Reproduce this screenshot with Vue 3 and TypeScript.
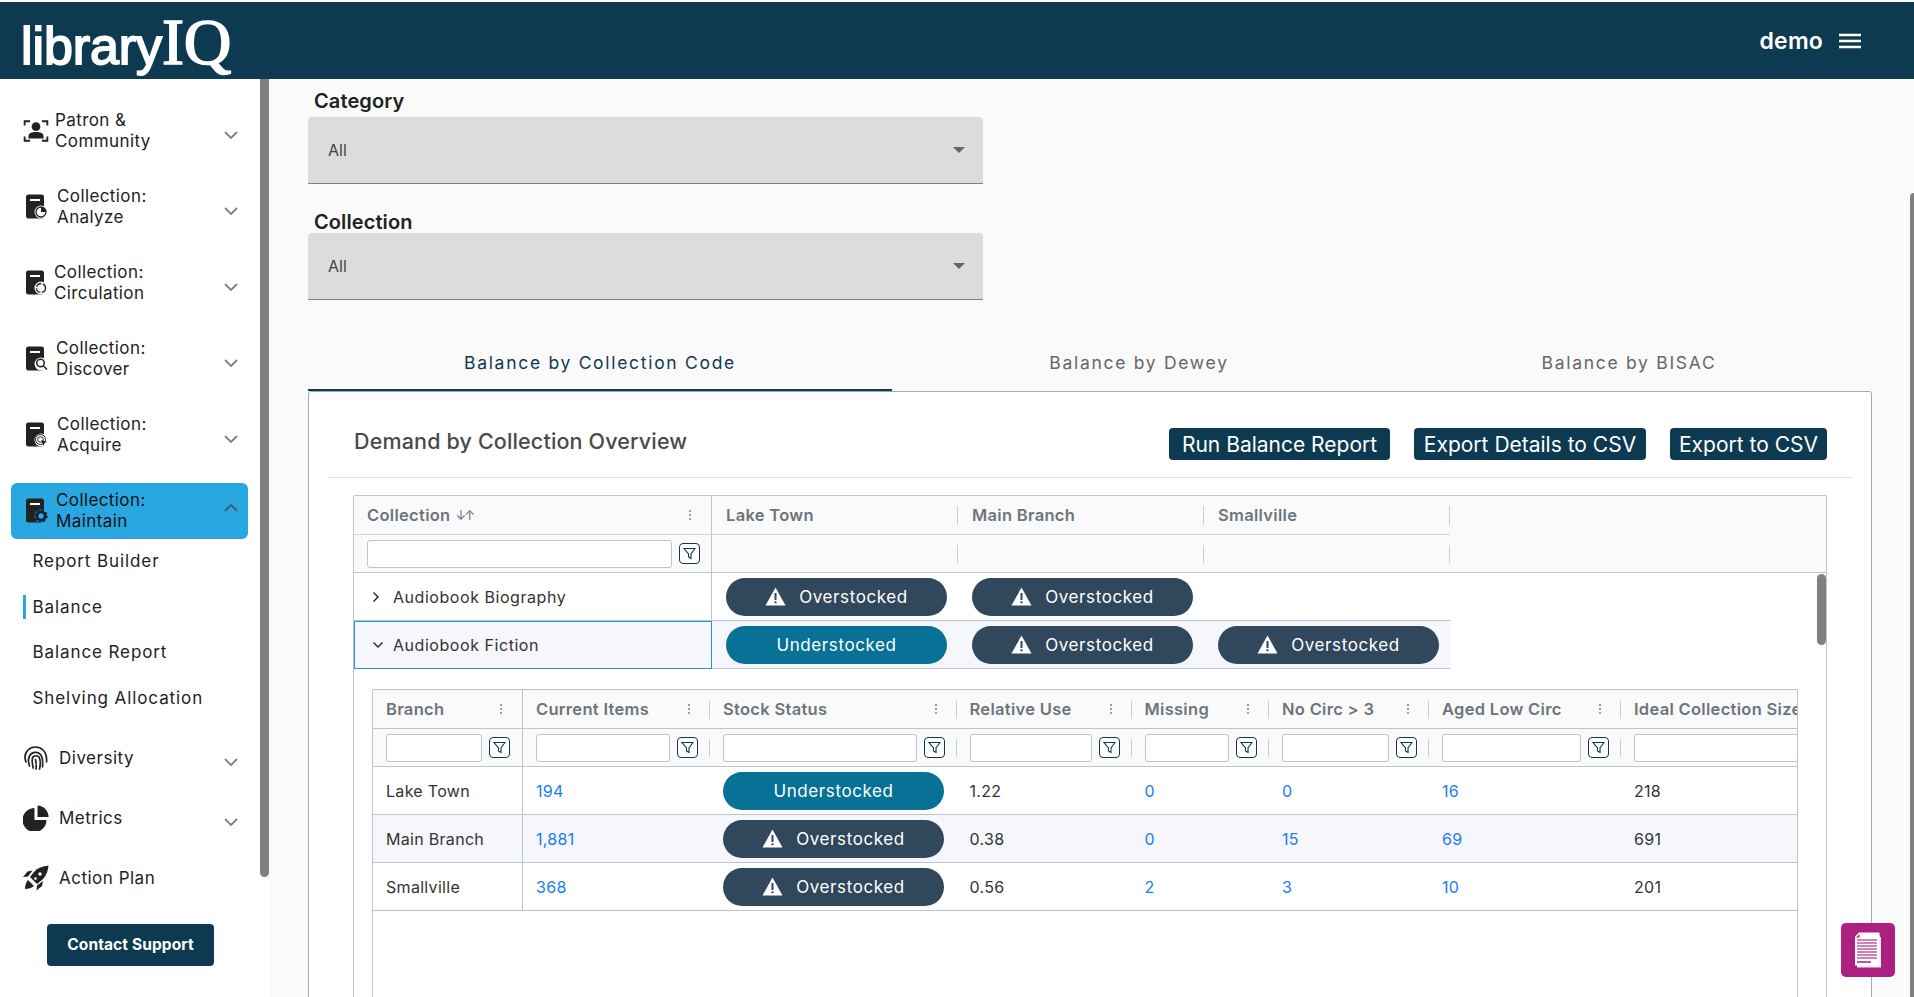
<script setup lang="ts">
interface NavItem { lines: string[]; icon: string; gap: number; chevron: boolean; active?: boolean }
interface Branch { name: string; items: string; stock: string; rel: string; missing: string; noCirc: string; aged: string; ideal: string }

const collectionNav: NavItem[] = [
  { lines: ['Patron &', 'Community'], icon: 'patron', gap: 31, chevron: true },
  { lines: ['Collection:', 'Analyze'], icon: 'analyze', gap: 33, chevron: true },
  { lines: ['Collection:', 'Circulation'], icon: 'circulation', gap: 30, chevron: true },
  { lines: ['Collection:', 'Discover'], icon: 'discover', gap: 32, chevron: true },
  { lines: ['Collection:', 'Acquire'], icon: 'acquire', gap: 33, chevron: true },
  { lines: ['Collection:', 'Maintain'], icon: 'maintain', gap: 32, chevron: true, active: true },
]
const subNav: string[] = ['Report Builder', 'Balance', 'Balance Report', 'Shelving Allocation']
const branches: string[] = ['Lake Town', 'Main Branch', 'Smallville']
const detailCols = [
  { title: 'Branch' }, { title: 'Current Items' }, { title: 'Stock Status' }, { title: 'Relative Use' },
  { title: 'Missing' }, { title: 'No Circ > 3' }, { title: 'Aged Low Circ' }, { title: 'Ideal Collection Size' },
]
const detailRows: Branch[] = [
  { name: 'Lake Town', items: '194', stock: 'Understocked', rel: '1.22', missing: '0', noCirc: '0', aged: '16', ideal: '218' },
  { name: 'Main Branch', items: '1,881', stock: 'Overstocked', rel: '0.38', missing: '0', noCirc: '15', aged: '69', ideal: '691' },
  { name: 'Smallville', items: '368', stock: 'Overstocked', rel: '0.56', missing: '2', noCirc: '3', aged: '10', ideal: '201' },
]
const fictionRow: string[] = ['Understocked', 'Overstocked', 'Overstocked']
const biographyRow: string[] = ['Overstocked', 'Overstocked']
</script>

<template>
  <div class="page">
    <header class="topbar">
      <div class="logo"><span class="logo-a">library</span><span class="logo-b">IQ</span></div>
      <div class="user">
        <span>demo</span>
        <svg width="24" height="16" viewBox="0 0 24 16"><path d="M1 2h22M1 8h22M1 14h22" stroke="#fff" stroke-width="2.4" /></svg>
      </div>
    </header>

    <div class="body">
      <aside class="side">
        <nav class="nav">
          <div v-for="item in collectionNav" :key="item.icon" class="nav-item" :class="{ active: item.active }">
            <svg v-if="item.icon === 'patron'" class="ic patron" width="26" height="26" viewBox="0 0 24 24">
              <path d="M1.5 7V3h5M17.5 3h5v4M1.5 17v4h5M17.5 21h5v-4" fill="none" stroke="#222" stroke-width="1.7" />
              <circle cx="12" cy="8" r="4" fill="#222" />
              <path d="M5 19v-2c0-3 3-4 7-4s7 1 7 4v2z" fill="#222" />
            </svg>
            <svg v-else class="ic" width="23" height="25" viewBox="0 0 23 25">
              <rect x="1" y="0.5" width="18" height="24" rx="2.5" fill="#222" />
              <rect x="5" y="5" width="10" height="2" fill="#fff" />
              <circle cx="16" cy="18" r="6.5" :fill="item.active ? '#29a7e1' : '#fff'" />
              <g v-if="item.icon === 'analyze'">
                <circle cx="16" cy="18" r="5" fill="none" stroke="#222" stroke-width="1.3" />
                <path d="M16 18V13a5 5 0 0 1 5 5z" fill="#222" />
              </g>
              <circle v-else-if="item.icon === 'circulation'" cx="16" cy="18" r="4.5" fill="none" stroke="#222" stroke-width="1.3" stroke-dasharray="6 1.5" />
              <g v-else-if="item.icon === 'discover'" fill="none" stroke="#222" stroke-width="1.5">
                <circle cx="15.5" cy="17" r="3.8" />
                <path d="M18.5 20l3.5 3.5" />
              </g>
              <g v-else-if="item.icon === 'acquire'" fill="none" stroke="#222" stroke-width="1">
                <circle cx="15.5" cy="17.5" r="5" />
                <circle cx="15.5" cy="17.5" r="2.8" />
                <path d="M16 18l6 2-2.5 1-1 3z" fill="#222" stroke="none" />
              </g>
              <g v-else>
                <circle cx="16" cy="18" r="4.2" fill="none" stroke="#10202c" stroke-width="3" />
                <circle cx="16" cy="18" r="6" fill="none" stroke="#10202c" stroke-width="1.5" stroke-dasharray="2 2.7" />
              </g>
            </svg>
            <div class="nav-text" :style="{ left: item.gap + 'px' }">
              <span v-for="l in item.lines" :key="l">{{ l }}</span>
            </div>
            <svg class="chev" :class="{ up: item.active }" width="14" height="8" viewBox="0 0 14 8"><path d="M1 1l6 6 6-6" fill="none" :stroke="item.active ? '#3c5a6c' : '#808080'" stroke-width="1.8" /></svg>
          </div>
        </nav>

        <div class="sub">
          <div v-for="s in subNav" :key="s" class="sub-item"><i v-if="s === 'Balance'" class="bar"></i>{{ s }}</div>
        </div>

        <div class="nav2">
          <div class="nav2-item">
            <svg class="ic2" width="26" height="26" viewBox="0 0 26 26" fill="none" stroke="#222" stroke-width="1.7" stroke-linecap="round">
              <path d="M3 17c-1.5-4-1-9 2-12 4-4 11-4 15 0 3 3 4 7 3.5 12" />
              <path d="M6.5 21c-1-3-1.5-7 0-10 2-4 8-5 11-1.5 2 2.5 2.5 7 2 12.5" />
              <path d="M10 23c0-3-1.5-6-.5-10 1-3 6-3 7 0 1 3 1 7 0 11" />
              <path d="M13 24c.5-3 0-7-.5-10" stroke-dasharray="4 1.5" />
            </svg>
            <span>Diversity</span>
            <svg class="chev low" width="14" height="8" viewBox="0 0 14 8"><path d="M1 1l6 6 6-6" fill="none" stroke="#808080" stroke-width="1.8" /></svg>
          </div>
          <div class="nav2-item">
            <svg class="ic2" width="26" height="26" viewBox="0 0 26 26">
              <path d="M11.5 3v12h12A12 12 0 1 1 11.5 3z" fill="#222" />
              <path d="M14.5 0.5a11.5 11.5 0 0 1 11 11.5h-11z" fill="#222" />
            </svg>
            <span>Metrics</span>
            <svg class="chev low" width="14" height="8" viewBox="0 0 14 8"><path d="M1 1l6 6 6-6" fill="none" stroke="#808080" stroke-width="1.8" /></svg>
          </div>
          <div class="nav2-item">
            <svg class="ic2" width="26" height="26" viewBox="0 0 26 26">
              <path d="M25.5 0.5c-6 .5-11 2.5-14.5 6.5l-4 5 7 7 5-4c4-3.5 6-9 6.5-14.5z" fill="#222" />
              <path d="M9.5 5.5l-5 1-4.5 5.5 5-.5zM20 16l-1 5-5.5 4.5.5-5z" fill="#222" />
              <path d="M5 15l6 6c-2 2-6 3-9 3 0-3 1-7 3-9z" fill="#222" />
              <circle cx="17" cy="9" r="1.7" fill="#fff" /><circle cx="12.5" cy="13.5" r="1.3" fill="#fff" />
            </svg>
            <span>Action Plan</span>
          </div>
        </div>

        <button class="support">Contact Support</button>
      </aside>
      <div class="side-scroll"></div>

      <main class="main">
        <label class="f-label first">Category</label>
        <div class="select"><span>All</span><i class="caret"></i></div>
        <label class="f-label second">Collection</label>
        <div class="select"><span>All</span><i class="caret"></i></div>

        <div class="tabs">
          <div class="tab on">Balance by Collection Code</div>
          <div class="tab">Balance by Dewey</div>
          <div class="tab">Balance by BISAC</div>
        </div>

        <section class="card">
          <div class="card-head">
            <h2>Demand by Collection Overview</h2>
            <div class="actions">
              <button class="act run">Run Balance Report</button>
              <button class="act details">Export Details to CSV</button>
              <button class="act csv">Export to CSV</button>
            </div>
          </div>

          <div class="grid">
            <div class="thead">
              <div class="th-row">
                <div class="c-col hcell">Collection <span class="sort">↓↑</span>
                  <svg class="dots" width="4" height="12" viewBox="0 0 4 12"><g fill="#888"><circle cx="2" cy="2" r="1.1" /><circle cx="2" cy="6" r="1.1" /><circle cx="2" cy="10" r="1.1" /></g></svg>
                </div>
                <div v-for="b in branches" :key="b" class="b-col hcell sep">{{ b }}</div>
              </div>
              <div class="fl-row">
                <div class="c-col fcell">
                  <div class="input wide"></div>
                  <span class="fbtn"><svg width="13" height="13" viewBox="0 0 13 13"><path d="M1 1.5h11L8 7v4.5L5.5 10V7z" fill="none" stroke="#0d3a50" stroke-width="1.1" /></svg></span>
                </div>
                <div v-for="b in branches" :key="b" class="b-col fcell sep"></div>
              </div>
            </div>

            <div class="g-row">
              <div class="c-col gcell">
                <svg class="tree" width="8" height="12" viewBox="0 0 8 12"><path d="M1.5 1.5L6 6l-4.5 4.5" fill="none" stroke="#222" stroke-width="1.4" /></svg>
                Audiobook Biography
              </div>
              <div v-for="(s, i) in biographyRow" :key="i" class="b-col pcell">
                <div class="pill over">
                  <svg width="21" height="19" viewBox="0 0 21 19"><path d="M10.5 0.5L20.5 18.5H0.5z" fill="#fff" /><path d="M9.5 6h2v7h-2zM9.5 14.3h2v2h-2z" fill="#31475b" /></svg>
                  {{ s }}
                </div>
              </div>
              <div class="b-col"></div>
            </div>
            <div class="g-row tinted">
              <div class="c-col gcell focus">
                <svg class="tree" width="12" height="8" viewBox="0 0 12 8"><path d="M1.5 1.5L6 6l4.5-4.5" fill="none" stroke="#222" stroke-width="1.4" /></svg>
                Audiobook Fiction
              </div>
              <div v-for="(s, i) in fictionRow" :key="i" class="b-col pcell tint">
                <div class="pill" :class="s === 'Overstocked' ? 'over' : 'under'">
                  <svg v-if="s === 'Overstocked'" width="21" height="19" viewBox="0 0 21 19"><path d="M10.5 0.5L20.5 18.5H0.5z" fill="#fff" /><path d="M9.5 6h2v7h-2zM9.5 14.3h2v2h-2z" fill="#31475b" /></svg>
                  {{ s }}
                </div>
              </div>
            </div>

            <div class="detail">
              <div class="d-head">
                <div v-for="(c, i) in detailCols" :key="c.title" class="d-cell hcell" :class="'col' + i">
                  {{ c.title }}
                  <svg v-if="i < 7" class="dots" width="4" height="12" viewBox="0 0 4 12"><g fill="#888"><circle cx="2" cy="2" r="1.1" /><circle cx="2" cy="6" r="1.1" /><circle cx="2" cy="10" r="1.1" /></g></svg>
                </div>
              </div>
              <div class="d-filter">
                <div v-for="(c, i) in detailCols" :key="c.title" class="d-cell fcell2" :class="'col' + i">
                  <div class="input"></div>
                  <span v-if="i < 7" class="fbtn"><svg width="13" height="13" viewBox="0 0 13 13"><path d="M1 1.5h11L8 7v4.5L5.5 10V7z" fill="none" stroke="#0d3a50" stroke-width="1.1" /></svg></span>
                </div>
              </div>
              <div v-for="(r, k) in detailRows" :key="r.name" class="d-row" :class="{ alt: k === 1 }">
                <div class="d-cell txt col0">{{ r.name }}</div>
                <div class="d-cell txt link col1">{{ r.items }}</div>
                <div class="d-cell col2">
                  <div class="pill" :class="r.stock === 'Overstocked' ? 'over' : 'under'">
                    <svg v-if="r.stock === 'Overstocked'" width="21" height="19" viewBox="0 0 21 19"><path d="M10.5 0.5L20.5 18.5H0.5z" fill="#fff" /><path d="M9.5 6h2v7h-2zM9.5 14.3h2v2h-2z" fill="#31475b" /></svg>
                    {{ r.stock }}
                  </div>
                </div>
                <div class="d-cell txt col3">{{ r.rel }}</div>
                <div class="d-cell txt link col4">{{ r.missing }}</div>
                <div class="d-cell txt link col5">{{ r.noCirc }}</div>
                <div class="d-cell txt link col6">{{ r.aged }}</div>
                <div class="d-cell txt col7">{{ r.ideal }}</div>
              </div>
            </div>
            <div class="grid-scroll"></div>
          </div>
        </section>
      </main>
      <div class="main-scroll"></div>
      <button class="notes" aria-label="Notes">
        <svg width="28" height="36" viewBox="0 0 28 36">
          <path d="M3 3.5V35.5h24V5H26V3.5z" fill="#fff" opacity=".9" />
          <path d="M1 4.5L5 0.5H25.5V33.5H1z" fill="#fff" />
          <path d="M2 5.5L5.5 2v3.5z" fill="#ab2080" />
          <g stroke="#c25aa2" stroke-width="1.5"><path d="M3 8h20M3 11h20M3 14h20M3 17h20M3 20h20M3 23h20M3 26h20" /><path d="M3 30h14" stroke="#ab2080" /></g>
        </svg>
      </button>
    </div>
  </div>
</template>

<style scoped>
.page { height: 997px; overflow: hidden; background: #fff; font-family: Inter, "Noto Sans", sans-serif; color: #222; padding-top: 2px; box-sizing: border-box; display: flex; flex-direction: column; }
.topbar { height: 77px; flex: none; background: #0d3a50; display: flex; align-items: center; justify-content: space-between; padding: 0 52px 0 21px; color: #fff; }
.logo { display: flex; align-items: baseline; line-height: 1; padding-top: 2px; }
.logo-a { font-family: "Liberation Sans", sans-serif; font-size: 52px; -webkit-text-stroke: 1.8px #fff; letter-spacing: -0.1px; }
.logo-b { font-family: "Liberation Serif", serif; font-size: 66px; -webkit-text-stroke: 1.6px #fff; }
.user { display: flex; align-items: center; gap: 15px; font-size: 23px; font-weight: 600; letter-spacing: .2px; }

.body { flex: 1; display: flex; position: relative; min-height: 0; }
.side { width: 260px; flex: none; padding-top: 23.5px; box-sizing: border-box; background: #fff; }
.side-scroll { width: 9px; flex: none; height: 798px; background: #808080; border-radius: 0 0 5px 5px; margin-right: -9px; position: relative; z-index: 1; }
.nav { padding: 0 12px 0 11px; display: flex; flex-direction: column; gap: 20px; }
.nav-item { position: relative; height: 56px; display: flex; align-items: center; border-radius: 6px; padding-left: 14px; }
.nav-item.active { background: #29a7e1; }
.nav-item.active .nav-text { color: #111; }
.ic.patron { margin-left: -2px; }
.nav-text { position: absolute; margin-left: 13px; display: flex; flex-direction: column; font-size: 17px; line-height: 21px; letter-spacing: .4px; color: #222; white-space: nowrap; }
.chev { position: absolute; right: 10px; top: 28px; }
.chev.up { transform: rotate(180deg); top: 21px; }
.sub { padding-left: 32.5px; }
.sub-item { height: 45.5px; display: flex; align-items: center; font-size: 17px; letter-spacing: .9px; position: relative; color: #222; }
.bar { position: absolute; left: -9.5px; top: 11px; width: 3px; height: 24px; background: #29a7e1; }
.nav2 { margin-top: 17px; padding: 0 0 0 23px; display: flex; flex-direction: column; gap: 20px; }
.nav2-item { height: 40px; display: flex; align-items: center; gap: 10px; position: relative; font-size: 17px; letter-spacing: .5px; }
.chev.low { right: 22px; top: 20px; }
.support { display: block; margin: 26px 0 0 47px; width: 167px; height: 42px; background: #0d3a50; color: #fff; border: 0; border-radius: 4px; font: 700 15.5px Inter, sans-serif; letter-spacing: .1px; }

.main { flex: 1; min-width: 0; margin-left: 9px; background: #fafafa; padding: 0 42px 0 39px; overflow: hidden; }
.f-label { display: block; font-size: 20px; font-weight: 600; color: #222; margin-left: 6px; letter-spacing: .1px; }
.f-label.first { line-height: 24px; padding-top: 10px; height: 38px; box-sizing: border-box; }
.f-label.second { line-height: 24px; margin-top: 26px; height: 23px; }
.select { width: 675px; height: 67px; box-sizing: border-box; background: #dcdcdc; border-bottom: 1px solid #808080; border-radius: 4px 4px 0 0; padding: 0 18px 0 20px; display: flex; align-items: center; justify-content: space-between; font-size: 16px; color: #444; }
.caret { width: 0; height: 0; border-left: 6px solid transparent; border-right: 6px solid transparent; border-top: 6px solid #666; }
.tabs { display: grid; grid-template-columns: 584px 494px 1fr; margin-top: 31px; height: 60px; }
.tab { display: flex; align-items: center; justify-content: center; padding-top: 2px; font-size: 17.5px; letter-spacing: 1.7px; color: #666; height: 60px; box-sizing: border-box; }
.tab.on { color: #12394e; border-bottom: 2px solid #0d3a50; padding-top: 4px; }
.card { height: 700px; background: #fff; border: 1px solid #a9a9a9; border-radius: 3px 3px 0 0; box-sizing: border-box; padding: 0 18px 0 19px; }
.card-head { height: 86px; display: flex; align-items: flex-start; justify-content: space-between; border-bottom: 1px solid #e5e5e5; padding: 36px 26px 0 26px; box-sizing: border-box; }
.card-head h2 { margin: 0; font-size: 21.5px; font-weight: 500; color: #4a4a4a; letter-spacing: .15px; line-height: 26px; }
.actions { display: flex; gap: 24px; }
.act { height: 32px; background: #0d3a50; color: #fff; border: 0; border-radius: 4px; font: 400 21px Inter, sans-serif; padding: 0; white-space: nowrap; }
.act.run { width: 221px; }
.act.details { width: 232px; }
.act.csv { width: 157px; }

.grid { margin: 17px 26px 0 25px; height: 600px; border: 1px solid #bcc4cc; border-bottom: 0; border-radius: 2px 2px 0 0; position: relative; overflow: hidden; }
.thead { background: #fafafa; border-bottom: 1px solid #bcc4cc; }
.th-row, .fl-row, .g-row { display: flex; }
.c-col { width: 358px; flex: none; box-sizing: border-box; border-right: 1px solid #bcc4cc; }
.b-col { width: 246px; flex: none; box-sizing: border-box; }
.hcell { font-size: 16.5px; font-weight: 600; color: #6c757d; letter-spacing: .3px; position: relative; display: flex; align-items: center; white-space: nowrap; }
.th-row { height: 39px; }
.th-row > div { height: 39px; border-bottom: 1px solid #cfd4d9; padding-left: 14px; }
.th-row .sort { font-weight: 400; margin-left: 5px; font-size: 13px; letter-spacing: -2px; }
.th-row > .c-col.hcell { padding-left: 13px; }
.dots { position: absolute; right: 19px; top: 13px; }
.sep { position: relative; }
.sep::after { content: ""; position: absolute; right: 0; top: 10px; bottom: 9px; width: 1px; background: #c8ced3; }
.fl-row { height: 37px; }
.fcell { display: flex; align-items: center; padding-left: 13px; gap: 7px; height: 37px; }
.input { height: 28px; box-sizing: border-box; background: #fff; border: 1px solid #bcc4cc; border-radius: 3px; flex: 1; min-width: 0; }
.input.wide { flex: none; width: 305px; }
.fbtn { width: 21px; height: 21px; box-sizing: border-box; border: 1px solid #0d3a50; border-radius: 4px; display: flex; align-items: center; justify-content: center; flex: none; background: #fff; }
.g-row { height: 48px; }
.g-row > div { height: 48px; border-bottom: 1px solid #bcc4cc; }
.gcell { display: flex; align-items: center; font-size: 16px; letter-spacing: .55px; padding-left: 18px; color: #333; gap: 13px; }
.focus { outline: 1px solid #2a93d5; outline-offset: -1px; background: #f5f7fc; padding-left: 18px; gap: 9px; }
.pcell { display: flex; align-items: center; padding-left: 14px; box-sizing: border-box; }
.tint { background: #f5f7fc; }
.pill { width: 221px; height: 38px; border-radius: 19px; color: #fff; display: flex; align-items: center; justify-content: center; gap: 13px; font-size: 17px; letter-spacing: .6px; flex: none; }
.over { background: #31475b; }
.under { background: #087196; }
.grid-scroll { position: absolute; right: 0; top: 78px; width: 9px; height: 71px; background: #808080; border-radius: 5px; }

.detail { margin: 20px 0 0 18px; width: 1426px; height: 500px; box-sizing: border-box; border: 1px solid #bcc4cc; border-bottom: 0; overflow: hidden; border-radius: 2px 2px 0 0; }
.d-head, .d-filter, .d-row { display: flex; width: 1600px; }
.d-head { height: 39px; background: #fafafa; border-bottom: 1px solid #bcc4cc; box-sizing: border-box; }
.d-filter { height: 38px; background: #fafafa; border-bottom: 1px solid #bcc4cc; box-sizing: border-box; }
.d-row { height: 48px; border-bottom: 1px solid #bcc4cc; box-sizing: border-box; background: #fff; }
.d-row.alt { background: #f5f7fc; }
.d-cell { flex: none; box-sizing: border-box; padding-left: 13px; position: relative; height: 100%; }
.col0 { width: 150px; border-right: 1px solid #bcc4cc; }
.col1 { width: 187px; }
.col2 { width: 246.5px; }
.col3 { width: 175px; }
.col4 { width: 137.5px; }
.col5 { width: 160px; }
.col6 { width: 192px; }
.col7 { width: 240px; }
.d-head .d-cell:not(.col0):not(.col7)::after, .d-filter .d-cell:not(.col0):not(.col7)::after { content: ""; position: absolute; right: 0; top: 10px; bottom: 9px; width: 1px; background: #c8ced3; }
.d-cell.hcell .dots { right: 19px; }
.fcell2 { display: flex; align-items: center; gap: 7px; padding-right: 12px; }
.fcell2.col7 .input { flex: none; width: 400px; }
.txt { display: flex; align-items: center; font-size: 16px; letter-spacing: .3px; color: #333; }
.txt.link { color: #1a7cf5; }
.d-row .col2 { display: flex; align-items: center; }
.main-scroll { position: absolute; right: 0; top: 114px; bottom: 0; width: 4px; background: #808080; border-radius: 4px 0 0 0; }
.notes { position: absolute; left: 1841px; top: 844px; width: 54px; height: 54px; border: 0; border-radius: 5px; background: #ab2080; display: flex; align-items: center; justify-content: center; padding: 0; }
</style>

<style>
html, body { margin: 0; background: #fff; overflow: hidden; }
</style>
